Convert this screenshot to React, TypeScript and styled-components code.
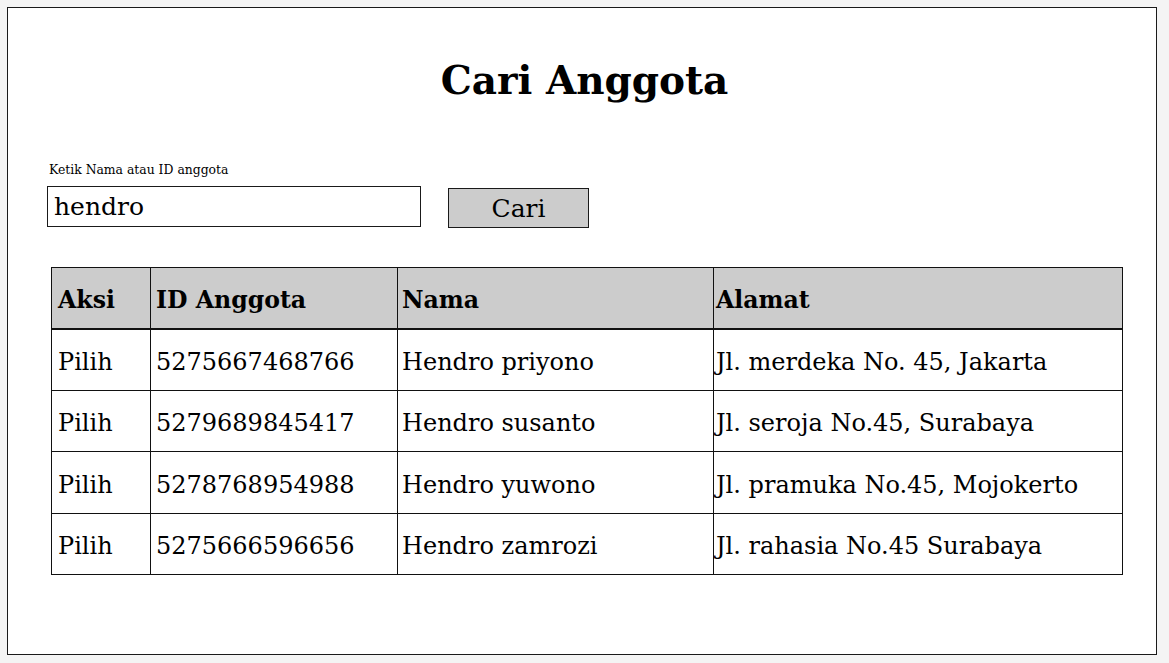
import styled, { createGlobalStyle } from "styled-components";

const GlobalStyle = createGlobalStyle`
  html, body {
    margin: 0;
    padding: 0;
    background: #f4f4f4;
  }
  body {
    font-family: "DejaVu Serif", serif;
    color: #000;
  }
`;

const Page = styled.div`
  padding: 7px 12px 8px 7px;
  width: 1169px;
  height: 663px;
  box-sizing: border-box;
`;

const Frame = styled.div`
  box-sizing: border-box;
  width: 1150px;
  height: 648px;
  background: #fff;
  border: 1.5px solid #1a1a1a;
  padding: 0 34px 0 39px;
`;

const Title = styled.h1`
  margin: 50px 0 0;
  text-align: center;
  font-size: 39px;
  font-weight: bold;
  line-height: 44px;
`;

const SearchForm = styled.div`
  margin-top: 60px;
  display: flex;
  flex-direction: column;
`;

const HintLabel = styled.label`
  font-size: 12.4px;
  margin-left: 2px;
  line-height: 15px;
`;

const SearchRow = styled.div`
  margin-top: 9px;
  display: flex;
  align-items: flex-start;
  gap: 27px;
`;

const SearchInput = styled.input`
  box-sizing: border-box;
  width: 374px;
  height: 41px;
  border: 1.5px solid #1a1a1a;
  padding: 0 6px;
  font-family: "DejaVu Serif", serif;
  font-size: 25px;
  color: #000;
  background: #fff;
  outline: none;
`;

const SearchButton = styled.button`
  box-sizing: border-box;
  width: 141px;
  height: 40px;
  margin-top: 2px;
  border: 1.5px solid #1a1a1a;
  background: #cccccc;
  font-family: "DejaVu Serif", serif;
  font-size: 25px;
  color: #000;
  padding: 0;
`;

const Table = styled.table`
  margin: 39px 0 0 4px;
  border-collapse: collapse;
  width: 1071px;
  table-layout: fixed;
`;

const HeadCell = styled.th<{ $w: number; $pad: number }>`
  width: ${(p) => p.$w}px;
  height: 61px;
  box-sizing: border-box;
  background: #cccccc;
  border: 1.5px solid #111;
  border-bottom-width: 2px;
  text-align: left;
  font-size: 23.6px;
  font-weight: bold;
  padding: 5px 0 0 ${(p) => p.$pad}px;
`;

const Cell = styled.td<{ $pad: number }>`
  height: 61.5px;
  box-sizing: border-box;
  border: 1.5px solid #111;
  font-size: 24px;
  padding: 5px 0 0 ${(p) => p.$pad}px;
  white-space: nowrap;
`;

const columns = [
  { label: "Aksi", w: 99, pad: 6 },
  { label: "ID Anggota", w: 247, pad: 5 },
  { label: "Nama", w: 316, pad: 4 },
  { label: "Alamat", w: 409, pad: 2 },
];

const members = [
  { id: "5275667468766", nama: "Hendro priyono", alamat: "Jl. merdeka No. 45, Jakarta" },
  { id: "5279689845417", nama: "Hendro susanto", alamat: "Jl. seroja No.45, Surabaya" },
  { id: "5278768954988", nama: "Hendro yuwono", alamat: "Jl. pramuka No.45, Mojokerto" },
  { id: "5275666596656", nama: "Hendro zamrozi", alamat: "Jl. rahasia No.45 Surabaya" },
];

export default function App() {
  return (
    <>
      <GlobalStyle />
      <Page>
        <Frame>
          <Title>Cari Anggota</Title>
          <SearchForm>
            <HintLabel htmlFor="cari">Ketik Nama atau ID anggota</HintLabel>
            <SearchRow>
              <SearchInput id="cari" defaultValue="hendro" />
              <SearchButton>Cari</SearchButton>
            </SearchRow>
          </SearchForm>
          <Table>
            <thead>
              <tr>
                {columns.map((c) => (
                  <HeadCell key={c.label} $w={c.w} $pad={c.pad}>
                    {c.label}
                  </HeadCell>
                ))}
              </tr>
            </thead>
            <tbody>
              {members.map((m) => (
                <tr key={m.id}>
                  <Cell $pad={columns[0].pad}>Pilih</Cell>
                  <Cell $pad={columns[1].pad}>{m.id}</Cell>
                  <Cell $pad={columns[2].pad}>{m.nama}</Cell>
                  <Cell $pad={columns[3].pad}>{m.alamat}</Cell>
                </tr>
              ))}
            </tbody>
          </Table>
        </Frame>
      </Page>
    </>
  );
}
